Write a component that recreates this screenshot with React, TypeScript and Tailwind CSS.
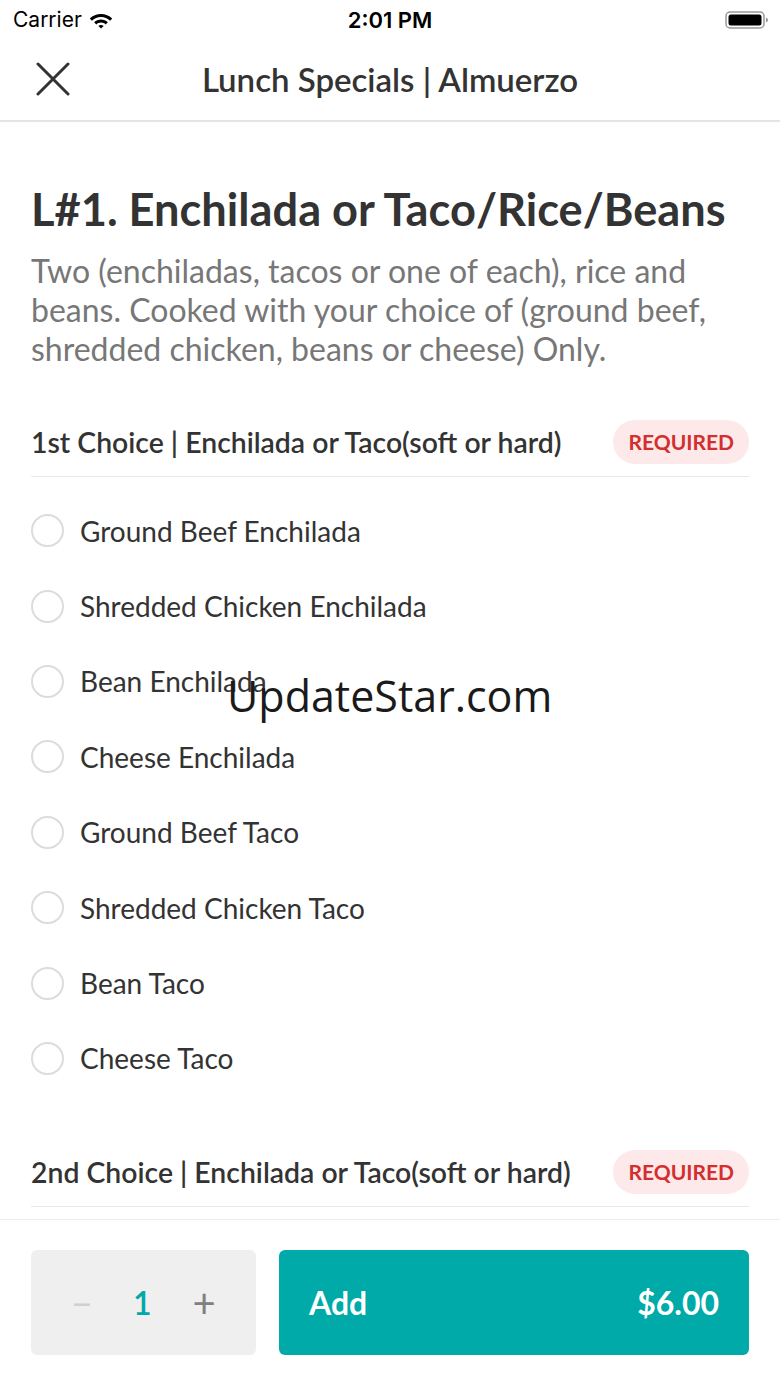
import React from "react";

const options = [
  "Ground Beef Enchilada",
  "Shredded Chicken Enchilada",
  "Bean Enchilada",
  "Cheese Enchilada",
  "Ground Beef Taco",
  "Shredded Chicken Taco",
  "Bean Taco",
  "Cheese Taco",
];

const lato = { fontFamily: "Lato, 'Open Sans', sans-serif" };

const SectionHeader = ({ title }: { title: string }) => (
  <div className="flex items-center justify-between h-[44px] border-b border-[#e8e8e8] box-content pb-[12px]">
    <span className="text-[28.4px] font-semibold text-[#333] whitespace-nowrap">{title}</span>
    <span className="h-[44px] px-[15px] flex items-center rounded-full bg-[#fde9e9] text-[#d32f2f] text-[21px] font-bold">
      REQUIRED
    </span>
  </div>
);

const App = () => {
  return (
    <div className="w-[780px] h-[1387px] bg-white flex flex-col relative overflow-hidden" style={lato}>
      {/* status bar */}
      <div className="h-[40px] flex items-center justify-between px-[13px] relative" style={{ fontFamily: "Inter, sans-serif" }}>
        <div className="flex items-center gap-[6px] text-[21px] text-black">
          <span>Carrier</span>
          <svg width="26" height="20" viewBox="0 0 26 20">
            <path d="M13 4C8.6 4 4.7 5.7 1.8 8.5L3.9 10.7C6.3 8.4 9.5 7 13 7s6.7 1.4 9.1 3.7l2.1-2.2C21.3 5.7 17.4 4 13 4z" fill="#000" />
            <path d="M13 9.6c-2.6 0-5 1-6.8 2.7l2.1 2.1c1.2-1.2 2.9-1.9 4.7-1.9s3.5.7 4.7 1.9l2.1-2.1C18 10.6 15.6 9.6 13 9.6z" fill="#000" />
            <path d="M13 15c-1 0-1.9.4-2.6 1L13 18.6 15.6 16c-.7-.6-1.6-1-2.6-1z" fill="#000" />
          </svg>
        </div>
        <span className="absolute left-1/2 -translate-x-1/2 text-[22px] font-semibold text-black">2:01 PM</span>
        <svg width="44" height="22" viewBox="0 0 44 22" className="mr-[-2px]">
          <rect x="1" y="3" width="38" height="16" rx="4" fill="none" stroke="#999" strokeWidth="1.5" />
          <rect x="3.5" y="5.5" width="33" height="11" rx="2.5" fill="#000" />
          <path d="M41 8.5v5c1.2-.4 2-1.4 2-2.5s-.8-2.1-2-2.5z" fill="#999" />
        </svg>
      </div>

      {/* nav bar */}
      <div className="h-[82px] flex items-center justify-center relative border-b-2 border-[#e4e4e4]">
        <svg width="34" height="34" viewBox="0 0 34 34" className="absolute left-[36px] top-[22px]">
          <path d="M2 2L32 32M32 2L2 32" stroke="#333" strokeWidth="3" strokeLinecap="round" />
        </svg>
        <span className="text-[33px] font-semibold text-[#333]">Lunch Specials | Almuerzo</span>
      </div>

      {/* content */}
      <div className="flex-1 overflow-hidden px-[31px] pt-[60px]">
        <h1 className="text-[45.2px] leading-[54px] font-bold text-[#333] whitespace-nowrap">
          L#1. Enchilada or Taco/Rice/Beans
        </h1>
        <p className="text-[32px] leading-[39px] text-[#777] mt-[15px]">
          Two (enchiladas, tacos or one of each), rice and beans. Cooked with your choice of (ground beef,
          shredded chicken, beans or cheese) Only.
        </p>

        <div className="mt-[52px]">
          <SectionHeader title="1st Choice | Enchilada or Taco(soft or hard)" />
        </div>
        <div className="flex flex-col pt-[16px]">
          {options.map((o) => (
            <div key={o} className="h-[75.4px] flex items-center gap-[16px]">
              <span className="w-[33px] h-[33px] rounded-full border-2 border-[#dcdcdc] shrink-0" />
              <span className="text-[28px] text-[#333]">{o}</span>
            </div>
          ))}
        </div>

        <div className="mt-[54px]">
          <SectionHeader title="2nd Choice | Enchilada or Taco(soft or hard)" />
        </div>
      </div>

      {/* footer */}
      <div className="h-[168px] border-t border-[#ececec] bg-white px-[31px] pt-[30px] flex gap-[23px] shrink-0">
        <div className="w-[225px] h-[105px] rounded-[6px] bg-[#efefef] flex items-center justify-around px-[20px]">
          <span className="text-[36px] text-[#d0d0d0] leading-none">−</span>
          <span className="text-[32px] font-semibold text-[#00a9a8]">1</span>
          <span className="text-[40px] text-[#808080] leading-none">+</span>
        </div>
        <div className="flex-1 h-[105px] rounded-[6px] bg-[#00aaa9] flex items-center justify-between px-[30px] text-white text-[32px] font-bold">
          <span>Add</span>
          <span>$6.00</span>
        </div>
      </div>

      {/* watermark */}
      <span
        className="absolute left-[227px] top-[674px] text-[43px] text-[#1a1a1a] leading-none"
        style={{ fontFamily: "'Open Sans', 'Noto Sans', sans-serif" }}
      >
        UpdateStar.com
      </span>
    </div>
  );
};

export default App;
